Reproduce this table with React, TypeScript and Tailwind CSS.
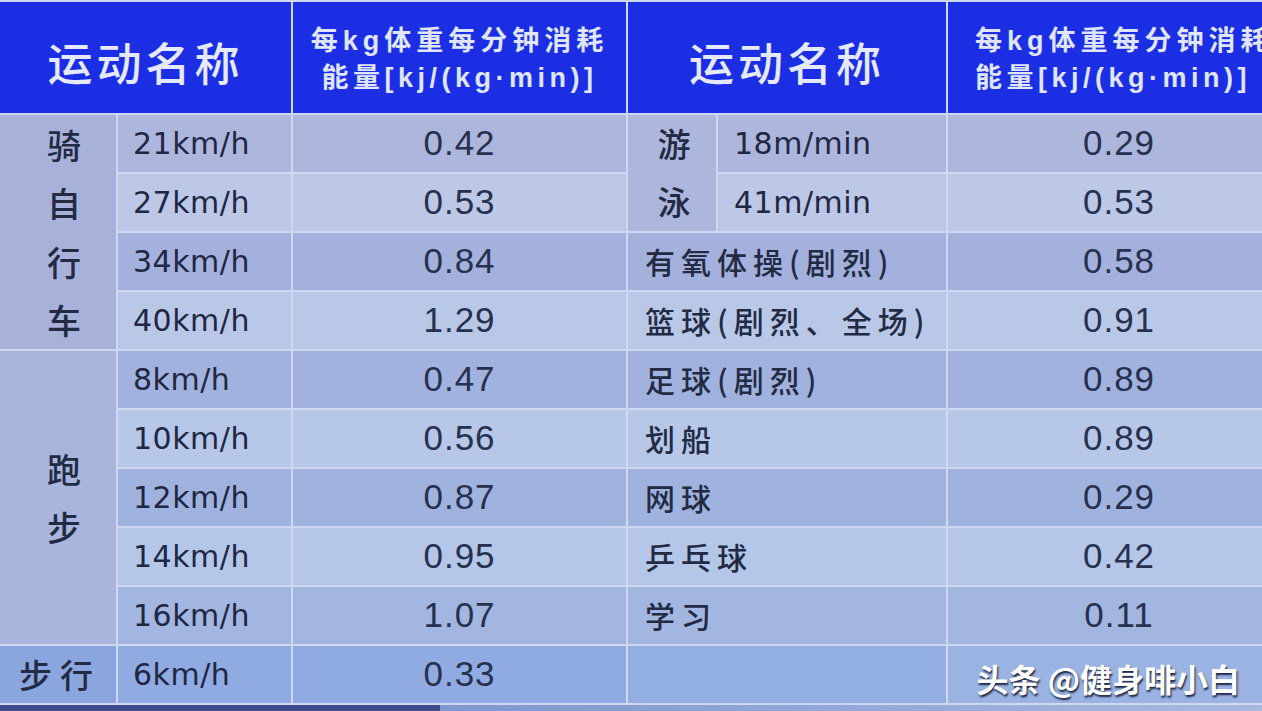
const cjk = "font-['Noto_Sans_CJK_SC',sans-serif]";
const sub = "font-['DejaVu_Sans',sans-serif] text-[30px] tracking-[0.5px] text-[#1f2744]";
const num = "font-['Liberation_Sans',Arial,sans-serif] text-[35px] tracking-[1px] text-[#27304e]";

type Row = { bg: string };

// row tones, top to bottom
const rows: Row[] = [
  { bg: "bg-[#adb6dc]" },
  { bg: "bg-[#bdc8e7]" },
  { bg: "bg-[#a3b1dc]" },
  { bg: "bg-[#bac8e8]" },
  { bg: "bg-[#a1b2de]" },
  { bg: "bg-[#b6c7e8]" },
  { bg: "bg-[#a0b3df]" },
  { bg: "bg-[#b4c7e8]" },
  { bg: "bg-[#a3b6e0]" },
  { bg: "bg-[#90abe2]" },
];

const leftSubs = ["21km/h", "27km/h", "34km/h", "40km/h", "8km/h", "10km/h", "12km/h", "14km/h", "16km/h", "6km/h"];
const leftVals = ["0.42", "0.53", "0.84", "1.29", "0.47", "0.56", "0.87", "0.95", "1.07", "0.33"];

const rightNames = ["有氧体操(剧烈)", "篮球(剧烈、全场)", "足球(剧烈)", "划船", "网球", "乒乓球", "学习", ""];
const rightVals = ["0.29", "0.53", "0.58", "0.91", "0.89", "0.89", "0.29", "0.42", "0.11", ""];

const rowStart = [
  "row-start-2",
  "row-start-3",
  "row-start-4",
  "row-start-5",
  "row-start-6",
  "row-start-7",
  "row-start-8",
  "row-start-9",
  "row-start-10",
  "row-start-11",
];

function HeadName({ col }: { col: string }) {
  return (
    <div className={`${col} row-start-1 bg-[#1b2ee4] flex items-center justify-center pt-[8px]`}>
      <span className={`${cjk} text-[45px] font-medium tracking-[4px] text-[#e4e9ff]`}>运动名称</span>
    </div>
  );
}

function HeadUnit({ col, clip }: { col: string; clip?: boolean }) {
  return (
    <div
      className={`${col} row-start-1 bg-[#1b2ee4] flex flex-col justify-center overflow-hidden whitespace-nowrap pt-[4px] ${
        clip ? "items-start pl-[27px]" : "items-center"
      } font-['Liberation_Sans','Noto_Sans_CJK_SC',sans-serif] text-[27px] font-bold leading-[37px] text-[#dfe5ff]`}
    >
      <span className="tracking-[5px]">每kg体重每分钟消耗</span>
      <span className="tracking-[4.5px]">能量[kj/(kg·min)]</span>
    </div>
  );
}

export default function App() {
  return (
    <div className="relative w-[1262px] h-[711px] overflow-hidden bg-[#cfd8f0] pt-[2px]">
      <div className="grid grid-cols-[116px_173px_333px_88px_228px_314px] grid-rows-[111px_repeat(10,57px)] gap-[2px]">
        <HeadName col="col-start-1 col-span-2" />
        <HeadUnit col="col-start-3" />
        <HeadName col="col-start-4 col-span-2" />
        <HeadUnit col="col-start-6" clip />

        {/* left groups */}
        <div className={`col-start-1 row-start-2 row-span-4 bg-[#a8b1d9] flex flex-col justify-around items-center pl-[12px] ${cjk} text-[34px] font-medium text-[#222a44]`}>
          <span>骑</span>
          <span>自</span>
          <span>行</span>
          <span>车</span>
        </div>
        <div className={`col-start-1 row-start-6 row-span-5 bg-[#a9b5dd] flex flex-col justify-center items-center pl-[12px] ${cjk} text-[34px] leading-[58px] font-medium text-[#222a44]`}>
          <span>跑</span>
          <span>步</span>
        </div>
        <div className={`col-start-1 row-start-11 bg-[#8ba6de] flex items-center justify-center pl-[4px] ${cjk} text-[33px] font-medium tracking-[8px] text-[#222a44]`}>
          步行
        </div>

        {leftSubs.map((s, i) => (
          <div key={"ls" + i} className={`col-start-2 ${rowStart[i]} ${rows[i].bg} flex items-center pl-[15px] ${sub}`}>
            {s}
          </div>
        ))}
        {leftVals.map((v, i) => (
          <div key={"lv" + i} className={`col-start-3 ${rowStart[i]} ${rows[i].bg} flex items-center justify-center ${num}`}>
            {v}
          </div>
        ))}

        {/* right side */}
        <div className={`col-start-4 row-start-2 row-span-2 bg-[#adb6dc] flex flex-col justify-around items-center pl-[4px] ${cjk} text-[33px] font-medium text-[#222a44]`}>
          <span>游</span>
          <span>泳</span>
        </div>
        <div className={`col-start-5 row-start-2 ${rows[0].bg} flex items-center pl-[16px] ${sub}`}>18m/min</div>
        <div className={`col-start-5 row-start-3 ${rows[1].bg} flex items-center pl-[16px] ${sub}`}>41m/min</div>

        {rightNames.map((n, i) => (
          <div
            key={"rn" + i}
            className={`col-start-4 col-span-2 ${rowStart[i + 2]} ${i === 7 ? "bg-[#93aee3]" : rows[i + 2].bg} flex items-center pl-[17px] ${cjk} text-[30px] font-medium tracking-[6px] text-[#222a44]`}
          >
            {n}
          </div>
        ))}
        {rightVals.map((v, i) => (
          <div
            key={"rv" + i}
            className={`col-start-6 ${rowStart[i]} ${i === 9 ? "bg-[#9ab3e3]" : rows[i].bg} flex items-center justify-center pl-[28px] ${num}`}
          >
            {v}
          </div>
        ))}
      </div>

      <div className="flex h-[7px] mt-[2px]">
        <div className="w-[440px] bg-[#3e4c8a]" />
        <div className="flex-1 bg-gradient-to-r from-[#7f97cc] to-[#a7b9e0]" />
      </div>

      <div
        className={`absolute right-[22px] bottom-[17px] ${cjk} text-[32px] font-bold leading-none text-white [text-shadow:1px_2px_2px_#1c2340]`}
      >
        头条 @健身啡小白
      </div>
    </div>
  );
}
